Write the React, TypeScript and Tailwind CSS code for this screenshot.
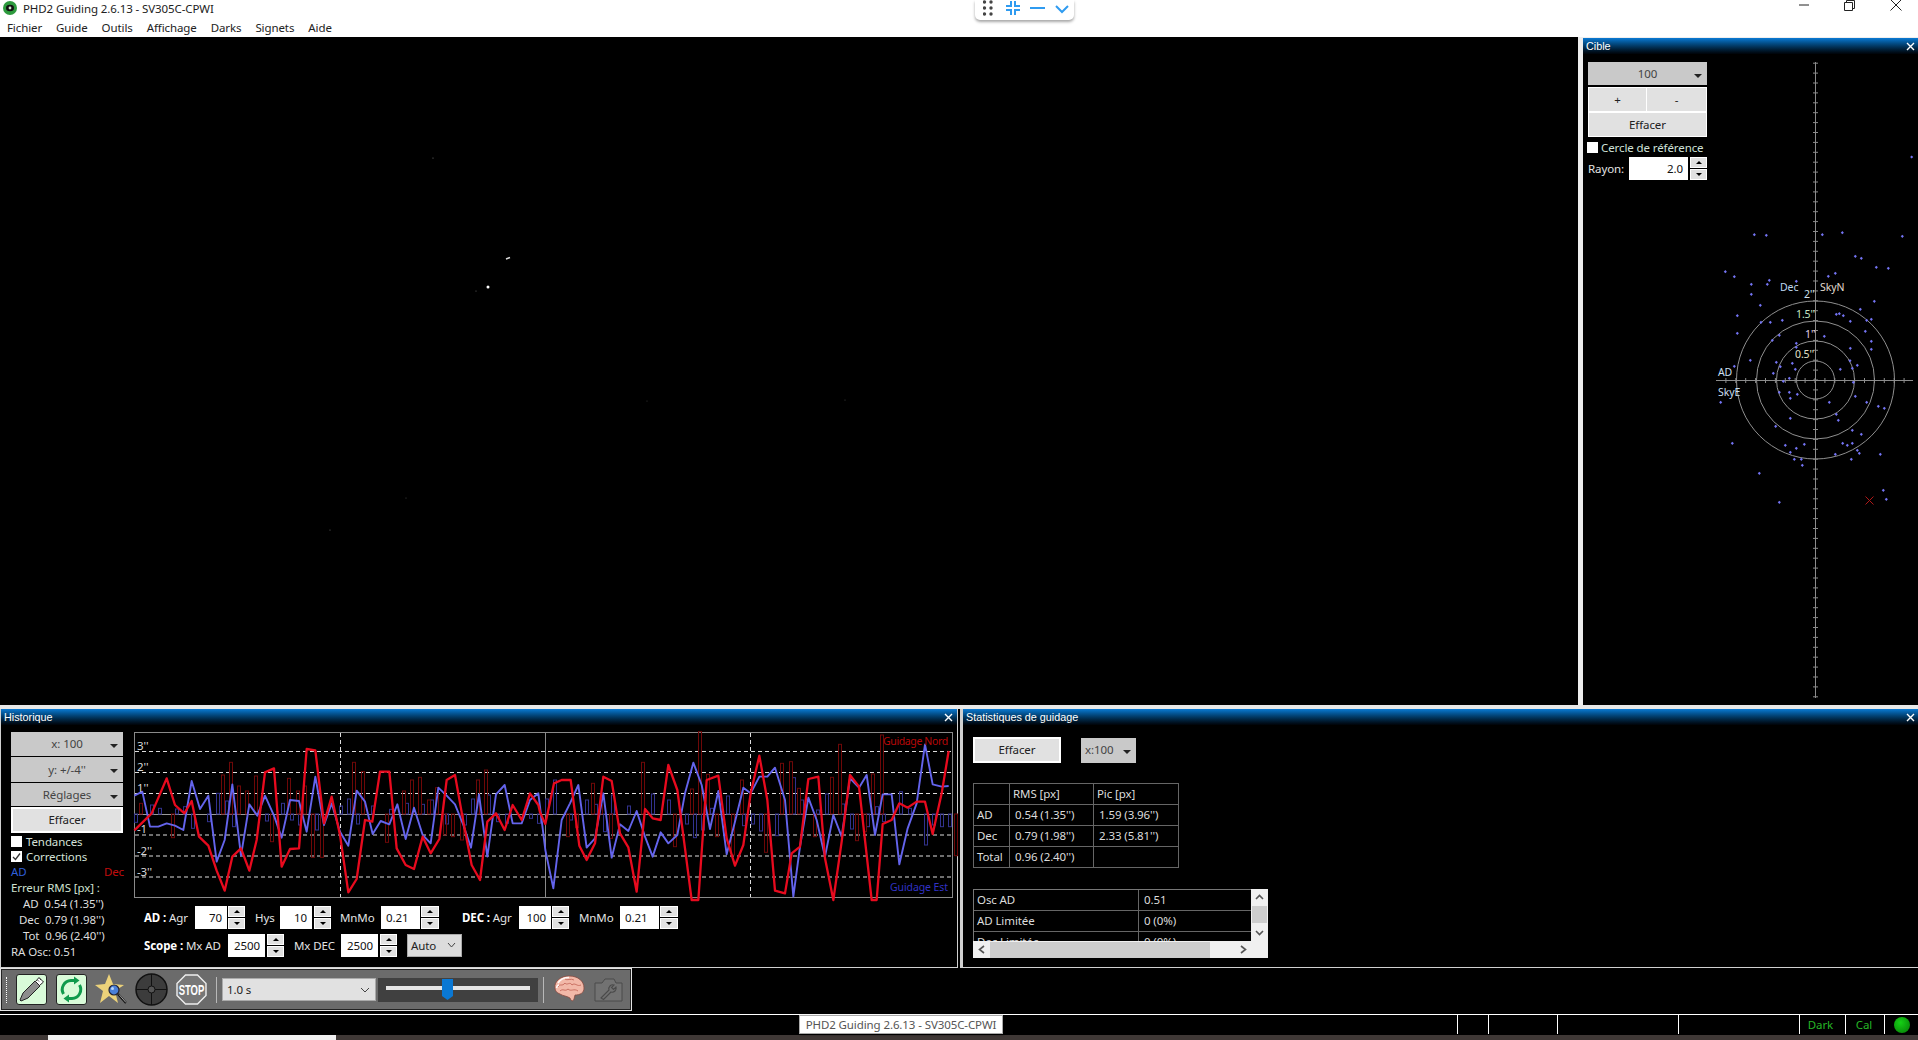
import type { ReactNode } from 'react';

// Coordonnées lues sur le zoom 3x du graphe (x = 130 + zx/3, y = 725 + zy/3)
const RED_A = [[13,316],[65,265],[110,160],[135,240],[163,265],[185,228],[207,335],[235,362],[260,437],[284,497],[307,395],[333,370],[358,437],[380,345],[405,142],[432,130],[455,425],[480,372],[507,370],[530,72],[556,76],[582,295],[605,215],[630,330],[655,502],[680,462],[705,285],[727,290],[750,140],[778,140],[800,370],[827,420],[852,432],[878,335],[902,385],[928,342],[950,165],[975,150],[1000,290],[1025,420],[1050,465],[1072,290],[1098,265],[1124,315],[1148,240],[1175,285],[1200,205],[1225,240]];
const BLUE_A = [[13,212],[37,200],[60,305],[85,305],[110,295],[135,302],[160,315],[185,168],[210,252],[235,212],[260,410],[284,345],[307,178],[333,392],[358,238],[382,272],[405,212],[432,272],[455,338],[480,225],[507,228],[530,320],[556,155],[582,300],[605,235],[630,320],[655,362],[680,197],[705,230],[728,327],[752,288],[778,298],[802,238],[827,342],[852,248],[878,330],[902,355],[925,188],[950,212],[975,238],[1000,300],[1023,368],[1047,208],[1072,395],[1098,208],[1124,180],[1148,295],[1175,295],[1200,225],[1225,205]];
const RED_B = [[0,262],[16,297],[42,175],[65,165],[92,165],[118,362],[140,405],[165,355],[190,155],[215,168],[240,325],[265,367],[290,500],[315,252],[338,280],[362,285],[385,120],[412,195],[435,370],[455,525],[475,525],[500,165],[535,152],[560,340],[585,422],[610,360],[632,205],[658,92],[682,225],[705,497],[735,505],[755,385],[780,365],[805,162],[835,155],[855,400],[880,525],[905,350],[930,150],[957,185],[980,390],[995,525],[1010,525],[1028,297],[1055,285],[1078,235],[1103,248],[1130,230],[1155,230],[1178,327],[1205,205],[1226,78]];
const BLUE_B = [[0,245],[16,375],[40,490],[65,285],[90,235],[115,180],[140,368],[165,340],[190,205],[215,398],[240,298],[265,318],[290,258],[315,335],[338,395],[362,322],[385,355],[412,330],[435,205],[460,113],[485,180],[510,312],[535,198],[560,388],[585,290],[610,188],[632,205],[658,155],[682,155],[705,128],[735,225],[760,515],[780,365],[805,218],[830,285],[855,395],[880,270],[905,335],[930,160],[957,188],[980,150],[1005,330],[1028,208],[1055,208],[1078,418],[1103,310],[1130,235],[1155,58],[1178,178],[1205,185],[1226,183]];

const RED_BARS_A = [[33,235],[130,338],[280,150],[303,112],[327,183],[352,198],[378,153],[425,350],[478,160],[503,198],[525,183],[550,397],[575,397],[672,112],[700,140],[772,352],[822,198],[845,165],[870,157],[897,225],[920,188],[945,330],[970,335],[995,345],[1043,165],[1068,135]];
const BLUE_BARS_A = [[18,292],[65,240],[90,250],[140,252],[165,245],[190,310],[238,290],[264,205],[290,228],[312,305],[410,288],[460,235],[485,285],[510,300],[560,315],[633,243],[657,222],[683,297],[730,243],[782,253],[830,235],[880,238],[905,225],[952,297],[1005,300],[1030,222],[1078,210],[1105,290],[1130,295],[1203,280],[1228,295]];
const RED_BARS_B = [[85,335],[110,308],[158,175],[183,240],[212,340],[310,112],[405,365],[455,192],[480,20],[503,148],[530,335],[580,390],[605,165],[678,382],[725,115],[752,110],[778,190],[825,335],[875,157],[900,58],[952,347],[975,320],[1000,147],[1025,30],[1248,392]];
const BLUE_BARS_B = [[20,222],[45,165],[93,285],[140,225],[168,238],[195,320],[218,210],[267,243],[340,207],[388,225],[442,297],[465,338],[490,315],[515,250],[563,213],[613,302],[640,297],[663,318],[710,332],[762,158],[785,225],[835,255],[860,207],[910,237],[935,312],[985,305],[1010,245],[1033,290],[1083,200],[1110,250],[1158,360],[1183,300],[1207,305],[1230,305]];

// Points de la cible (x = 1680 + zx/3, y = 220 + zy/3)
const TARGET_DOTS = [[223,44],[259,46],[427,44],[487,38],[667,49],[526,109],[544,115],[589,142],[625,145],[136,155],[163,170],[268,181],[262,193],[214,193],[349,184],[445,169],[466,160],[214,223],[241,256],[583,244],[541,268],[172,287],[469,283],[478,281],[490,287],[511,304],[560,301],[574,298],[243,307],[271,307],[307,301],[172,340],[298,346],[277,361],[433,349],[556,334],[574,364],[574,388],[349,370],[349,382],[511,385],[211,421],[289,427],[337,430],[301,440],[346,448],[510,422],[532,436],[517,445],[481,448],[163,439],[280,460],[310,484],[328,475],[520,487],[298,517],[328,517],[352,523],[331,535],[526,529],[448,547],[560,547],[595,559],[613,565],[122,547],[469,583],[331,595],[475,601],[287,619],[517,631],[544,643],[157,670],[373,673],[316,676],[349,685],[331,697],[488,670],[502,676],[517,670],[532,691],[538,700],[601,703],[466,703],[343,718],[364,718],[514,718],[367,736],[238,760],[610,811],[619,838],[298,847],[-310,-183],[695,-189]];

const mapA = (p: number[]) => [130 + p[0] / 3, 725 + p[1] / 3];
const mapB = (p: number[]) => [540 + p[0] / 3, 725 + p[1] / 3];
const toLine = (pts: number[][]) => pts.map((p) => p.join(',')).join(' ');

const MENUS = ['Fichier', 'Guide', 'Outils', 'Affichage', 'Darks', 'Signets', 'Aide'];

function Caret() {
  return <span className="absolute right-[5px] top-[12px] h-0 w-0 border-x-[4px] border-t-[4px] border-x-transparent border-t-[#222]" />;
}

function DropButton({ label, className }: { label: string; className: string }) {
  return (
    <div className={`relative flex items-center justify-center bg-[#c9c9c9] text-[#444] ${className}`}>
      {label}
      <Caret />
    </div>
  );
}

function PanelHeader({ title, closeRight }: { title: string; closeRight: string }) {
  return (
    <div className="flex h-[16px] shrink-0 items-center justify-between bg-linear-to-b from-[#0a7ad4] to-[#000408] pl-[3px] font-['Liberation_Sans',sans-serif] text-[10.8px] tracking-normal text-white">
      <span>{title}</span>
      <svg width="9" height="9" viewBox="0 0 9 9" className={closeRight}>
        <path d="M1 1 8 8M8 1 1 8" stroke="white" strokeWidth="1.4" />
      </svg>
    </div>
  );
}

function Spin({ className = 'w-[17px]' }: { className?: string }) {
  return (
    <div className={`flex h-[23px] shrink-0 flex-col gap-px ${className}`}>
      <div className="flex flex-1 items-center justify-center border border-white bg-[#e1e1e1]">
        <span className="h-0 w-0 border-x-[3px] border-b-[3px] border-x-transparent border-b-black" />
      </div>
      <div className="flex flex-1 items-center justify-center border border-white bg-[#e1e1e1]">
        <span className="h-0 w-0 border-x-[3px] border-t-[3px] border-x-transparent border-t-black" />
      </div>
    </div>
  );
}

function Num({ value, className, left }: { value: string; className: string; left?: boolean }) {
  return (
    <div className={`flex h-[23px] shrink-0 items-center bg-white px-[5px] text-[#111] ${left ? 'justify-start' : 'justify-end'} ${className}`}>
      {value}
    </div>
  );
}

function Label({ children, className }: { children: ReactNode; className: string }) {
  return <div className={`shrink-0 whitespace-nowrap text-[#e4e4e4] ${className}`}>{children}</div>;
}

function Box({ checked }: { checked?: boolean }) {
  return (
    <span className="mr-[4px] flex h-[11px] w-[11px] shrink-0 items-center justify-center bg-white">
      {checked && (
        <svg width="9" height="9" viewBox="0 0 9 9">
          <path d="M1 5 3.5 7.5 8 1.5" fill="none" stroke="#333" strokeWidth="1.3" />
        </svg>
      )}
    </span>
  );
}

function GuideGraph() {
  const gridYs = [751.5, 772.5, 793.5, 835, 856, 877];
  const labels = [['3\'\'', 137, 750], ['2\'\'', 137, 771], ['1\'\'', 137, 792], ['-1', 137, 833], ['-2\'\'', 137, 855], ['-3\'\'', 137, 876]] as const;
  const bars = (list: number[][], map: (p: number[]) => number[], color: string) =>
    list.map((p, i) => {
      const [x, y] = map(p);
      return <rect key={color + i + x} x={Math.round(x) - 1.5} y={Math.min(y, 814)} width="3" height={Math.abs(y - 814)} fill="none" stroke={color} />;
    });
  return (
    <svg viewBox="134 732 820 166" className="block h-[166px] w-[820px] overflow-visible">
      <rect x="134.5" y="732.5" width="818" height="165" fill="none" stroke="#8a8a8a" />
      {gridYs.map((y) => (
        <line key={y} x1="135" x2="952" y1={y} y2={y} stroke="#ddd" strokeDasharray="4 3" />
      ))}
      <line x1="135" x2="952" y1="814.5" y2="814.5" stroke="#9a9a9a" />
      <line x1="340.5" x2="340.5" y1="733" y2="897" stroke="#ddd" strokeDasharray="4 3" />
      <line x1="545.5" x2="545.5" y1="733" y2="897" stroke="#8a8a8a" />
      <line x1="750.5" x2="750.5" y1="733" y2="897" stroke="#ddd" strokeDasharray="4 3" />
      {bars(BLUE_BARS_A, mapA, '#32328e')}
      {bars(BLUE_BARS_B, mapB, '#32328e')}
      {bars(RED_BARS_A, mapA, '#6e0808')}
      {bars(RED_BARS_B, mapB, '#6e0808')}
      <polyline points={toLine(BLUE_A.map(mapA).concat(BLUE_B.map(mapB)))} fill="none" stroke="#6464ec" strokeWidth="1.9" strokeLinejoin="round" />
      <polyline points={toLine(RED_A.map(mapA).concat(RED_B.map(mapB)))} fill="none" stroke="#e80a1e" strokeWidth="2.3" strokeLinejoin="round" />
      {labels.map(([t, x, y]) => (
        <text key={t} x={x} y={y} fill="#d8d8d8" fontSize="11.5" fontFamily="'Noto Sans',sans-serif">{t}</text>
      ))}
      <text x="883" y="745" fill="#b80808" fontSize="10.5" textLength="65" fontFamily="'Noto Sans',sans-serif">Guidage Nord</text>
      <text x="890" y="891" fill="#3232c4" fontSize="10.5" textLength="58" fontFamily="'Noto Sans',sans-serif">Guidage Est</text>
    </svg>
  );
}

function TargetPlot() {
  const vTicks: number[] = [];
  for (let y = 380 - 9.9 * 32; y < 700; y += 9.9) vTicks.push(y);
  const hTicks: number[] = [];
  for (let x = 1815 - 9.9 * 9; x < 1914; x += 9.9) hTicks.push(x);
  const textProps = { fontSize: 10.5, fontFamily: "'Noto Sans',sans-serif" };
  return (
    <svg viewBox="1708 54 210 651" className="block h-[651px] w-[210px] shrink-0">
      <line x1="1815.5" x2="1815.5" y1="62" y2="698" stroke="#8c8c8c" />
      <line x1="1716" x2="1913" y1="380.5" y2="380.5" stroke="#8c8c8c" />
      {vTicks.map((y) => (
        <line key={y} x1="1813" x2="1818" y1={y} y2={y} stroke="#8c8c8c" />
      ))}
      {hTicks.map((x) => (
        <line key={x} x1={x} x2={x} y1="378" y2="383" stroke="#8c8c8c" />
      ))}
      {[19, 39, 59, 79].map((r) => (
        <circle key={r} cx="1815.5" cy="380" r={r} fill="none" stroke="#8f8f8f" />
      ))}
      {TARGET_DOTS.map(([x, y]) => (
        <rect key={`${x}-${y}`} x={1680 + x / 3 - 1.1} y={220 + y / 3 - 1.1} width="2.2" height="2.2" fill="#7474f4" transform={`rotate(45 ${1680 + x / 3} ${220 + y / 3})`} />
      ))}
      <path d="M1865.5 496.5 1873.5 504.5M1873.5 496.5 1865.5 504.5" stroke="#b01818" strokeWidth="1" />
      <text x="1780" y="291" fill="#bcd6ee" {...textProps}>Dec</text>
      <text x="1820" y="291" fill="#e2dccf" {...textProps}>SkyN</text>
      <text x="1804" y="298" fill="#cfe0ee" {...textProps}>2''</text>
      <text x="1796" y="318" fill="#c4e6c4" {...textProps}>1.5''</text>
      <text x="1805" y="338" fill="#e4cfe8" {...textProps}>1''</text>
      <text x="1795" y="358" fill="#e2e0c8" {...textProps}>0.5''</text>
      <text x="1718" y="376" fill="#c9dff0" {...textProps}>AD</text>
      <text x="1718" y="396" fill="#c9dff0" {...textProps}>SkyE</text>
    </svg>
  );
}

function ToolBtn({ children, green }: { children: ReactNode; green?: boolean }) {
  return (
    <div className={`flex h-[31px] w-[31px] shrink-0 items-center justify-center ${green ? 'rounded-[3px] border border-[#222] bg-[#d9fbd9]' : ''}`}>
      {children}
    </div>
  );
}

function Toolbar() {
  return (
    <div className="flex h-[43px] w-[632px] items-center border border-[#e4e4e4] bg-[#6b6b6b] outline outline-1 -outline-offset-2 outline-[#222]">
      <div className="ml-[5px] h-[26px] w-[2px] border-l border-dotted border-white" />
      <div className="ml-[8px] flex items-center gap-[9px]">
        <ToolBtn green>
          <svg width="29" height="29" viewBox="0 0 29 29">
            <path d="M18 6 23 11 11 23 4 26 3 25 6 18Z" fill="#8c8c8c" stroke="#222" strokeWidth="1" />
            <path d="M18.5 6.5 22 2.5 26.5 7 22.5 10.5Z" fill="#fff" stroke="#222" strokeWidth="1" />
            <path d="M20.5 5 22 6.5M22.5 3.5 24 5" stroke="#222" strokeWidth="0.8" />
          </svg>
        </ToolBtn>
        <ToolBtn green>
          <svg width="29" height="29" viewBox="0 0 29 29">
            <path d="M6.5 19A9 9 0 0 1 14 5.5L18.5 5.5" fill="none" stroke="#0f9a4c" strokeWidth="3" />
            <path d="M17 1.5 22.5 5.5 17 9.5Z" fill="#0f9a4c" />
            <path d="M22.5 10A9 9 0 0 1 15 23.5L10.5 23.5" fill="none" stroke="#0f9a4c" strokeWidth="3" />
            <path d="M12 19.5 6.5 23.5 12 27.5Z" fill="#0f9a4c" />
          </svg>
        </ToolBtn>
        <ToolBtn>
          <svg width="33" height="31" viewBox="0 0 33 31" className="shrink-0">
            <path d="M14 0 18 10 29 11 20 17 23 29 14 22 5 29 8 17 0 11 10 10Z" fill="#ecd27a" />
            <circle cx="19" cy="16" r="5" fill="#4a7fd8" stroke="#223" strokeWidth="1.2" />
            <circle cx="17.5" cy="14.5" r="1.5" fill="#b8d4f6" />
            <path d="M23 20 31 29" stroke="#111" strokeWidth="2.2" />
            <path d="M24 20.5 31 28.5" stroke="#ddd" strokeWidth="0.7" />
          </svg>
        </ToolBtn>
        <ToolBtn>
          <svg width="33" height="33" viewBox="0 0 33 33" className="shrink-0">
            <circle cx="16.5" cy="16.5" r="15.5" fill="#3c3c3c" stroke="#111" strokeWidth="1.5" />
            <path d="M1 16.5H32M16.5 1V32" stroke="#111" strokeWidth="1" />
            <circle cx="16.5" cy="16.5" r="3.5" fill="#555" stroke="#111" />
          </svg>
        </ToolBtn>
        <ToolBtn>
          <svg width="31" height="31" viewBox="0 0 31 31">
            <path d="M9.5 1H21.5L30 9.5V21.5L21.5 30H9.5L1 21.5V9.5Z" fill="#777" stroke="#eee" strokeWidth="1.4" />
            <text transform="translate(15.5 20.5) scale(0.95 1.5)" textAnchor="middle" fill="white" fontSize="10" fontWeight="700" fontFamily="'Liberation Sans',sans-serif">STOP</text>
          </svg>
        </ToolBtn>
      </div>
      <div className="ml-[9px] h-[26px] w-px bg-[#b8b8b8]" />
      <div className="relative ml-[5px] flex h-[23px] w-[154px] shrink-0 items-center border border-[#aaa] bg-[#e1e1e1] pl-[4px] text-[#222]">
        1.0 s
        <svg width="10" height="6" viewBox="0 0 10 6" className="absolute right-[5px] top-[8px]">
          <path d="M1 1 5 5 9 1" fill="none" stroke="#444" />
        </svg>
      </div>
      <div className="relative ml-[2px] flex h-[24px] w-[160px] shrink-0 items-center bg-[#404040] px-[8px]">
        <div className="h-[4px] w-[144px] -translate-y-[2px] bg-[#e4e4e4]" />
        <svg width="11" height="22" viewBox="0 0 11 22" className="absolute left-[64px] top-[1px]">
          <path d="M0 0H11V17L5.5 21 0 17Z" fill="#0a78d4" />
        </svg>
      </div>
      <div className="ml-[5px] h-[26px] w-px bg-[#b8b8b8]" />
      <svg width="32" height="30" viewBox="0 0 32 30" className="ml-[9px] shrink-0">
        <path d="M2 13C1 6 8 1 16 1C25 1 31 6 31 13C31 18 27 20 22 20L21 24C20 27 18 26 17 23C14 21 10 21 7 19C4 18 2 16 2 13Z" fill="#f2b8a8" stroke="#8a4a40" strokeWidth="0.8" />
        <path d="M5 12C7 8 9 12 12 8C14 11 17 6 19 10C22 7 24 12 28 10M7 16C10 13 12 17 15 14C18 17 21 13 25 16M12 4C14 6 18 3 21 5" fill="none" stroke="#c4685a" strokeWidth="0.9" />
        <path d="M5 8C8 3 13 2.5 16 2.5M3.5 13C4 11 5 10 6 10" fill="none" stroke="#fff" strokeWidth="1.5" opacity="0.9" />
      </svg>
      <svg width="29" height="24" viewBox="0 0 29 24" className="ml-[9px] shrink-0">
        <path d="M1 5H8L11 1H20L22 5H28V23H1Z" fill="#727272" stroke="#4a4a4a" />
        <path d="M7 20 15 12C14 9 17 6 20 7L17.5 9.5 19.5 11.5 22 9C23 12 20 15 17 14L9.5 21.5Z" fill="none" stroke="#4a4a4a" strokeWidth="1.1" />
      </svg>
    </div>
  );
}

function HistoryPane() {
  return (
    <div className="flex h-full w-[958px] shrink-0 flex-col border-x border-b border-[#d0d0d0]">
      <PanelHeader title="Historique" closeRight="mr-[4px]" />
      <div className="flex flex-1">
        <div className="w-[133px] shrink-0 pl-[10px] pt-[7px]">
          <div className="flex w-[112px] flex-col gap-px">
            <DropButton label="x: 100" className="h-[24px]" />
            <DropButton label="y: +/-4''" className="h-[25px]" />
            <DropButton label="Réglages" className="h-[23px]" />
            <div className="flex h-[26px] items-center justify-center border-2 border-white bg-[#e1e1e1] text-[#222]">Effacer</div>
          </div>
          <div className="mt-px flex h-[15px] items-center text-[#d4e0d8]"><Box />Tendances</div>
          <div className="flex h-[15px] items-center text-[#d4e0d8]"><Box checked />Corrections</div>
          <div className="flex h-[15px] w-[113px] items-center justify-between">
            <span className="text-[#2f5fd8]">AD</span>
            <span className="text-[#c00d0d]">Dec</span>
          </div>
          <div className="mt-px flex h-[16px] items-center text-[#cfe0d0]">Erreur RMS [px] :</div>
          <div className="flex h-[16px] items-center pl-[12px] text-[#dedede]">AD&nbsp; 0.54 (1.35'')</div>
          <div className="flex h-[16px] items-center pl-[8px] text-[#dedede]">Dec&nbsp; 0.79 (1.98'')</div>
          <div className="flex h-[16px] items-center pl-[12px] text-[#dedede]">Tot&nbsp; 0.96 (2.40'')</div>
          <div className="flex h-[16px] items-center text-[#dedede]">RA Osc: 0.51</div>
        </div>
        <div className="pt-[7px]">
          <GuideGraph />
          <div className="mt-[8px] flex items-center pl-[10px]">
            <Label className="w-[51px]"><b className="font-bold text-white">AD :</b> Agr</Label>
            <Num value="70" className="w-[32px]" />
            <Spin className="ml-px w-[17px]" />
            <Label className="ml-[10px] w-[25px]">Hys</Label>
            <Num value="10" className="w-[32px]" />
            <Spin className="ml-[2px] w-[17px]" />
            <Label className="ml-[9px] w-[41px]">MnMo</Label>
            <Num value="0.21" left className="w-[39px]" />
            <Spin className="ml-px w-[18px]" />
            <Label className="ml-[23px] w-[57px]"><b className="font-bold text-white">DEC :</b> Agr</Label>
            <Num value="100" className="w-[32px]" />
            <Spin className="ml-px w-[17px]" />
            <Label className="ml-[10px] w-[41px]">MnMo</Label>
            <Num value="0.21" left className="w-[39px]" />
            <Spin className="ml-px w-[18px]" />
          </div>
          <div className="mt-[5px] flex items-center pl-[10px]">
            <Label className="w-[84px]"><b className="font-bold text-white">Scope :</b> Mx AD</Label>
            <Num value="2500" className="w-[37px]" />
            <Spin className="ml-[2px] w-[17px]" />
            <Label className="ml-[10px] w-[47px]">Mx DEC</Label>
            <Num value="2500" className="w-[37px]" />
            <Spin className="ml-[2px] w-[17px]" />
            <div className="relative ml-[10px] flex h-[23px] w-[55px] items-center border border-[#aaa] bg-[#dcdcdc] pl-[3px] text-[#222]">
              Auto
              <svg width="9" height="6" viewBox="0 0 9 6" className="absolute right-[5px] top-[7px]">
                <path d="M1 1 4.5 5 8 1" fill="none" stroke="#444" />
              </svg>
            </div>
          </div>
        </div>
      </div>
    </div>
  );
}

function StatsPane() {
  const cell = 'flex items-center border-r border-b border-[#666] px-[3px] text-[#dcdcdc]';
  return (
    <div className="ml-[2px] flex h-full flex-1 flex-col border-b border-l-[3px] border-[#d0d0d0]">
      <PanelHeader title="Statistiques de guidage" closeRight="mr-[3px]" />
      <div className="flex-1 pl-[10px] pt-[12px]">
        <div className="flex items-center">
          <div className="flex h-[26px] w-[88px] items-center justify-center border-2 border-white bg-[#e1e1e1] text-[#222]">Effacer</div>
          <DropButton label="x:100" className="ml-[20px] h-[25px] w-[55px] justify-start pl-[4px]" />
        </div>
        <div className="mt-[20px] grid w-[206px] grid-cols-[36px_84px_85px] auto-rows-[21px] border-l border-t border-[#666]">
          <div className={cell} />
          <div className={cell}>RMS [px]</div>
          <div className={cell}>Pic [px]</div>
          <div className={cell}>AD</div>
          <div className={`${cell} pl-[5px]`}>0.54 (1.35'')</div>
          <div className={`${cell} pl-[5px]`}>1.59 (3.96'')</div>
          <div className={cell}>Dec</div>
          <div className={`${cell} pl-[5px]`}>0.79 (1.98'')</div>
          <div className={`${cell} pl-[5px]`}>2.33 (5.81'')</div>
          <div className={cell}>Total</div>
          <div className={`${cell} pl-[5px]`}>0.96 (2.40'')</div>
          <div className={cell} />
        </div>
        <div className="mt-[21px] w-[295px]">
          <div className="flex h-[52px]">
            <div className="grid w-[278px] grid-cols-[165px_113px] auto-rows-[21px] overflow-hidden border-l border-t border-[#777]">
              <div className={cell}>Osc AD</div>
              <div className={`${cell} pl-[5px]`}>0.51</div>
              <div className={cell}>AD Limitée</div>
              <div className={`${cell} pl-[5px]`}>0 (0%)</div>
              <div className={cell}>Dec Limitée</div>
              <div className={`${cell} pl-[5px]`}>0 (0%)</div>
            </div>
            <div className="flex w-[17px] flex-col items-center bg-[#f0f0f0] pt-[5px]">
              <svg width="9" height="6" viewBox="0 0 9 6"><path d="M1 5 4.5 1.5 8 5" fill="none" stroke="#555" strokeWidth="1.6" /></svg>
              <div className="mt-[6px] h-[17px] w-[15px] bg-[#cdcdcd]" />
              <svg width="9" height="6" viewBox="0 0 9 6" className="mt-[7px]"><path d="M1 1 4.5 4.5 8 1" fill="none" stroke="#555" strokeWidth="1.6" /></svg>
            </div>
          </div>
          <div className="flex h-[17px] items-center bg-[#f0f0f0]">
            <svg width="17" height="9" viewBox="0 0 17 9"><path d="M11 1 6.5 4.5 11 8" fill="none" stroke="#555" strokeWidth="1.6" /></svg>
            <div className="h-[16px] w-[220px] bg-[#cdcdcd]" />
            <svg width="9" height="9" viewBox="0 0 9 9" className="ml-[29px]"><path d="M2 1 6.5 4.5 2 8" fill="none" stroke="#555" strokeWidth="1.6" /></svg>
          </div>
        </div>
      </div>
    </div>
  );
}

function StatusBar() {
  const statusCell = 'flex h-full items-center justify-center border-l border-white';
  return (
    <div className="flex h-[21px] shrink-0 border-t border-white pb-px text-[#26b526]">
      <div className="flex-1" />
      <div className={`${statusCell} w-[31px]`} />
      <div className={`${statusCell} w-[69px]`} />
      <div className={`${statusCell} w-[121px]`} />
      <div className={`${statusCell} w-[121px]`} />
      <div className={`${statusCell} w-[46px] pr-[4px]`}>Dark</div>
      <div className={`${statusCell} w-[39px] pr-[2px]`}>Cal</div>
      <div className={`${statusCell} w-[34px]`}>
        <span className="h-[16px] w-[16px] rounded-full bg-[radial-gradient(circle_at_40%_35%,#16d016,#067a06)]" />
      </div>
    </div>
  );
}

export default function App() {
  return (
    <div className="relative flex h-[1040px] w-[1918px] flex-col overflow-hidden bg-black font-['Noto_Sans',sans-serif] text-[11.5px] leading-none tracking-[-0.1px]">
      <div className="h-[37px] shrink-0 bg-white text-[#222]">
        <div className="flex h-[18px] items-center">
          <svg width="16" height="16" viewBox="0 0 16 16" className="ml-[2px]">
            <circle cx="8" cy="7" r="7" fill="#2d9a3e" />
            <ellipse cx="8" cy="7" rx="4" ry="3.2" fill="#111" />
            <circle cx="8" cy="7" r="1.4" fill="#cfe8cf" />
          </svg>
          <span className="ml-[5px]">PHD2 Guiding 2.6.13 - SV305C-CPWI</span>
          <div className="flex-1" />
          <svg width="10" height="10" viewBox="0 0 10 10" className="mr-[35px] -translate-y-[4px]"><path d="M0 5H10" stroke="#222" /></svg>
          <svg width="11" height="11" viewBox="0 0 11 11" className="mr-[35px] -translate-y-[4px]"><path d="M.5 2.5H8.5V10.5H.5ZM2.5 2.5V.5H10.5V8.5H8.5" fill="none" stroke="#222" /></svg>
          <svg width="12" height="12" viewBox="0 0 12 12" className="mr-[16px] -translate-y-[4px]"><path d="M.5.5 11.5 11.5M11.5.5 .5 11.5" stroke="#222" /></svg>
        </div>
        <div className="flex h-[19px] items-center gap-[14px] pl-[7px]">
          {MENUS.map((m) => (
            <span key={m}>{m}</span>
          ))}
        </div>
      </div>

      <div className="flex h-[668px] shrink-0">
        <div className="flex-1">
          <svg viewBox="0 37 1578 668" className="block h-[668px] w-[1578px]">
            <path d="M506 259 510 257.5" stroke="#ddd" strokeWidth="1.5" />
            <circle cx="488" cy="287" r="1.5" fill="#fff" />
            <circle cx="476" cy="291" r="0.6" fill="#666" />
            <circle cx="433" cy="158" r="0.6" fill="#777" />
            <circle cx="330" cy="530" r="0.6" fill="#666" />
            <circle cx="406" cy="498" r="0.5" fill="#555" />
            <circle cx="845" cy="400" r="0.5" fill="#555" />
            <circle cx="647" cy="401" r="0.5" fill="#444" />
          </svg>
        </div>
        <div className="flex w-[340px] shrink-0 flex-col border-l-[5px] border-t border-[#eeeeee]">
          <PanelHeader title="Cible" closeRight="mr-[3px]" />
          <div className="flex flex-1">
            <div className="w-[125px] shrink-0 pl-[5px] pt-[8px]">
              <div className="flex w-[119px] flex-col">
                <DropButton label="100" className="h-[23px]" />
                <div className="mt-[2px] flex gap-[1px] bg-white p-px">
                  <div className="flex h-[23px] w-[57px] items-center justify-center bg-[#e1e1e1] text-[#222]">+</div>
                  <div className="flex h-[23px] flex-1 items-center justify-center bg-[#e1e1e1] text-[#222]">-</div>
                </div>
                <div className="flex h-[25px] items-center justify-center border border-white bg-[#e1e1e1] text-[#222]">Effacer</div>
              </div>
              <div className="-ml-px mt-[4px] flex h-[13px] items-center whitespace-nowrap text-[#cfe0d8]">
                <Box />
                <span className="-ml-px">Cercle de référence</span>
              </div>
              <div className="mt-[3px] flex items-center">
                <Label className="w-[41px]">Rayon:</Label>
                <Num value="2.0" className="w-[59px]" />
                <Spin className="ml-[2px] w-[17px]" />
              </div>
            </div>
            <TargetPlot />
          </div>
        </div>
      </div>

      <div className="flex h-[263px] shrink-0 flex-col">
        <div className="h-[4px] shrink-0 bg-[#e8e8e8]" />
        <div className="flex h-[259px]">
          <HistoryPane />
          <StatsPane />
        </div>
      </div>

      <div className="h-[46px] shrink-0">
        <Toolbar />
      </div>

      <StatusBar />

      <div className="flex h-[5px] shrink-0 bg-[#3f3836]">
        <div className="ml-[48px] h-full w-[288px] bg-[#f0f0f0]" />
      </div>

      {/* Barre flottante en haut de l'écran */}
      <div className="absolute left-[975px] top-0 flex h-[20px] w-[99px] items-center rounded-b-[5px] bg-white pl-[8px] shadow-[0_2px_3px_rgba(0,0,0,0.35)]">
        <svg width="10" height="16" viewBox="0 0 10 16" className="-translate-y-[2px]">
          {[2, 8, 14].flatMap((y) => [1.5, 8].map((x) => <circle key={`${x}${y}`} cx={x} cy={y} r="1.7" fill="#444" />))}
        </svg>
        <svg width="16" height="16" viewBox="0 0 16 16" className="ml-[12px] -translate-y-[2px]">
          <path d="M6 1V6H1M10 1V6H15M6 15V10H1M10 15V10H15" fill="none" stroke="#2f9bf0" strokeWidth="2" />
        </svg>
        <div className="ml-[9px] h-[2px] w-[15px] -translate-y-[2px] bg-[#2f9bf0]" />
        <svg width="14" height="9" viewBox="0 0 14 9" className="ml-[10px] -translate-y-[1px]">
          <path d="M1 1 7 7 13 1" fill="none" stroke="#2f9bf0" strokeWidth="2" />
        </svg>
      </div>

      {/* Infobulle de la barre des tâches */}
      <div className="absolute left-[799px] top-[1015px] flex h-[19px] w-[204px] items-center justify-center whitespace-nowrap border border-[#aaa] bg-white text-[#555] shadow-[1px_1px_2px_rgba(0,0,0,0.4)]">
        PHD2 Guiding 2.6.13 - SV305C-CPWI
      </div>
    </div>
  );
}
